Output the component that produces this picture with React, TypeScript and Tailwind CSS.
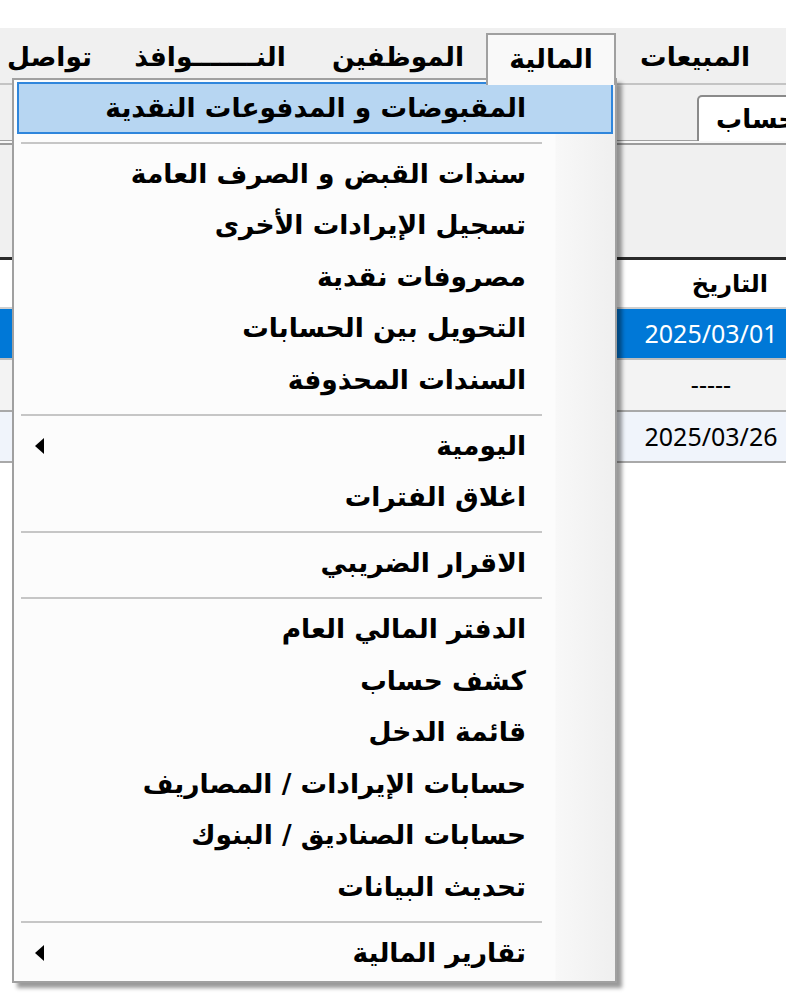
import React from "react";

type Entry = { t: "item"; label: string; sub?: boolean; active?: boolean } | { t: "sep" };

const entries: Entry[] = [
  { t: "item", label: "المقبوضات و المدفوعات  النقدية", active: true },
  { t: "sep" },
  { t: "item", label: "سندات القبض و الصرف العامة" },
  { t: "item", label: "تسجيل الإيرادات الأخرى" },
  { t: "item", label: "مصروفات نقدية" },
  { t: "item", label: "التحويل بين الحسابات" },
  { t: "item", label: "السندات المحذوفة" },
  { t: "sep" },
  { t: "item", label: "اليومية", sub: true },
  { t: "item", label: "اغلاق الفترات" },
  { t: "sep" },
  { t: "item", label: "الاقرار الضريبي" },
  { t: "sep" },
  { t: "item", label: "الدفتر المالي العام" },
  { t: "item", label: "كشف حساب" },
  { t: "item", label: "قائمة الدخل" },
  { t: "item", label: "حسابات الإيرادات / المصاريف" },
  { t: "item", label: "حسابات الصناديق / البنوك" },
  { t: "item", label: "تحديث البيانات" },
  { t: "sep" },
  { t: "item", label: "تقارير المالية", sub: true },
];

function Arrow() {
  return (
    <svg width="9" height="16" viewBox="0 0 9 16" className="block">
      <polygon points="0,8 9,0 9,16" fill="#000" />
    </svg>
  );
}

export default function App() {
  return (
    <div className="relative w-[786px] h-[1000px] overflow-hidden bg-white font-['DejaVu_Sans',sans-serif] text-black">
      {/* top white strip */}
      <div className="h-[28px] bg-white" />

      {/* menubar */}
      <div dir="rtl" className="flex h-[55px] bg-[#f0f0f0] pr-[12px] text-[26.5px] font-bold">
        <div className="w-[158px] shrink-0 flex items-center justify-center pt-[3px]">المبيعات</div>
        <div className="relative z-20 w-[130px] shrink-0 mt-[5px] h-[52px] border-2 border-b-0 border-[#a0a0a0] bg-[#f9f9f9] flex items-start justify-center pt-[4px]">
          المالية
        </div>
        <div className="w-[176px] shrink-0 flex items-center justify-center pt-[3px]">الموظفين</div>
        <div className="w-[200px] shrink-0 flex items-center justify-center pt-[3px]">النـــــــوافذ</div>
        <div className="flex-1 flex items-center pr-[18px] pt-[3px] whitespace-nowrap tracking-[-0.5px]">تواصل معنا</div>
      </div>
      <div className="h-[2px] bg-[#c4c4c4]" />

      {/* tab strip */}
      <div className="flex h-[56px] bg-[#f0f0f0]">
        <div className="w-[697px] shrink-0 border-b border-[#a0a0a0]" />
        <div className="w-[220px] shrink-0 mt-[10px] bg-white border-2 border-b-0 border-[#8a8a8a] rounded-tl-[5px] flex items-center pl-[17px] text-[26px] font-bold whitespace-nowrap">
          <span dir="rtl">كشف حساب</span>
        </div>
      </div>
      <div className="h-[2px] bg-[#f7f7f7]" />
      <div className="h-[2px] bg-[#9c9c9c]" />

      {/* toolbar panel */}
      <div className="h-[112px] bg-[#f0f0f0]" />
      <div className="h-[3px] bg-[#2a2a2a]" />

      {/* grid */}
      <div className="h-[47px] bg-white flex justify-end items-center pr-[18px] text-[24px] font-bold" dir="ltr">
        <span dir="rtl">التاريخ</span>
      </div>
      <div className="h-[2px] bg-[#cfcfcf]" />
      <div className="h-[49px] bg-[#0078d7] flex justify-end font-['Noto_Sans',sans-serif] text-[25px] text-white">
        <div className="w-[150px] flex items-center justify-center">2025/03/01</div>
      </div>
      <div className="h-[2px] bg-[#bdbdbd]" />
      <div className="h-[50px] bg-[#f3f3f3] flex justify-end font-['Noto_Sans',sans-serif] text-[25px]">
        <div className="w-[150px] flex items-center justify-center">-----</div>
      </div>
      <div className="h-[2px] bg-[#a9a9a9]" />
      <div className="h-[49px] bg-[#f0f4fb] flex justify-end font-['Noto_Sans',sans-serif] text-[25px]">
        <div className="w-[150px] flex items-center justify-center">2025/03/26</div>
      </div>
      <div className="h-[2px] bg-[#a9a9a9]" />

      {/* dropdown menu */}
      <div className="absolute left-[12px] top-[78px] z-10 w-[605px] border-2 border-[#a0a0a0] bg-[linear-gradient(to_right,#fcfcfc_0px,#fcfcfc_541px,#f8f8f8_542px,#efefef_100%)] shadow-[5px_5px_4px_rgba(0,0,0,0.4)] pt-[2px] pb-[2px]">
        {entries.map((e, i) =>
          e.t === "sep" ? (
            <div key={i} className="h-[14.5px] pt-[8px] pl-[7px] pr-[73px]">
              <div className="h-[2px] bg-[#c6c6c6]" />
            </div>
          ) : (
            <div
              key={i}
              className={
                "h-[51.5px] ml-[3px] mr-[2px] border-2 flex items-center justify-between pl-[16px] pr-[85px] text-[26.5px] font-bold " +
                (e.active ? "border-[#2f86dc] bg-[#b7d6f2]" : "border-transparent")
              }
            >
              <span>{e.sub ? <Arrow /> : null}</span>
              <span dir="rtl" className="whitespace-nowrap">{e.label}</span>
            </div>
          )
        )}
      </div>
    </div>
  );
}
